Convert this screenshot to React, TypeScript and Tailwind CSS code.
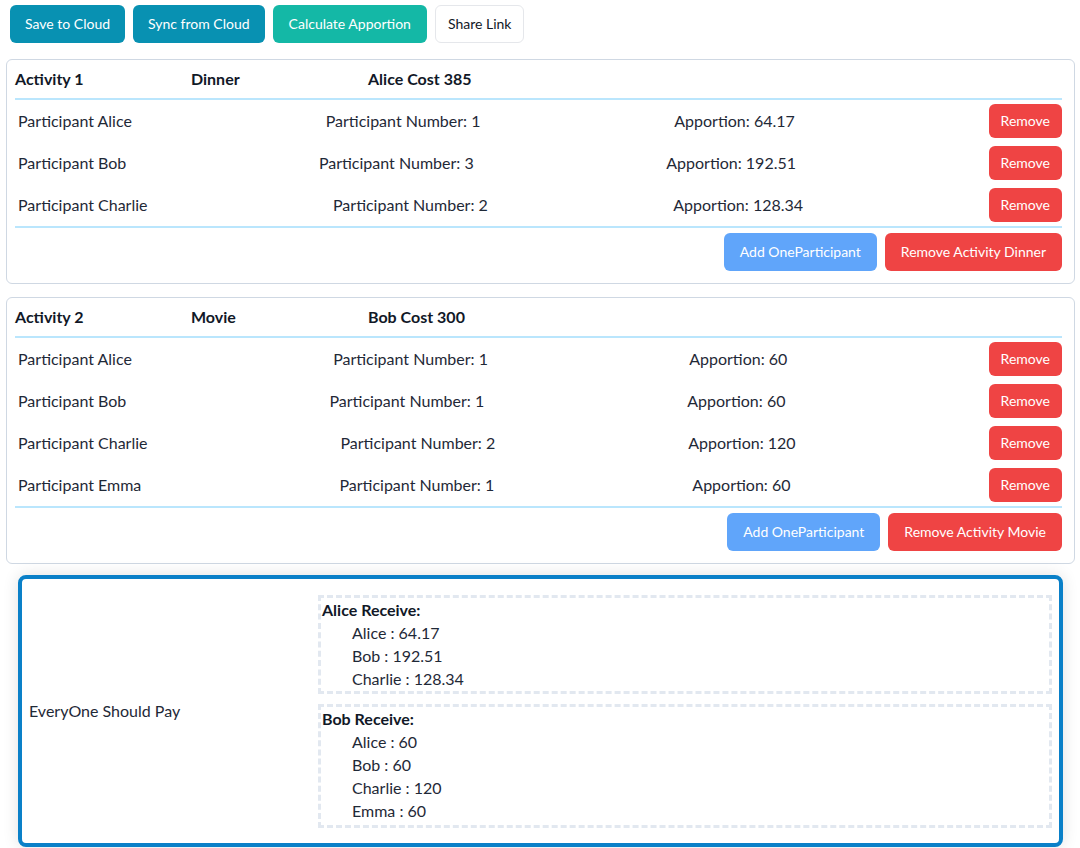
import React from "react";

type P = { name: string; num: number; app: string };
type A = { idx: number; name: string; payer: string; cost: number; parts: P[] };

const activities: A[] = [
  {
    idx: 1,
    name: "Dinner",
    payer: "Alice",
    cost: 385,
    parts: [
      { name: "Alice", num: 1, app: "64.17" },
      { name: "Bob", num: 3, app: "192.51" },
      { name: "Charlie", num: 2, app: "128.34" },
    ],
  },
  {
    idx: 2,
    name: "Movie",
    payer: "Bob",
    cost: 300,
    parts: [
      { name: "Alice", num: 1, app: "60" },
      { name: "Bob", num: 1, app: "60" },
      { name: "Charlie", num: 2, app: "120" },
      { name: "Emma", num: 1, app: "60" },
    ],
  },
];

const receives = [
  {
    who: "Alice",
    items: [
      ["Alice", "64.17"],
      ["Bob", "192.51"],
      ["Charlie", "128.34"],
    ],
  },
  {
    who: "Bob",
    items: [
      ["Alice", "60"],
      ["Bob", "60"],
      ["Charlie", "120"],
      ["Emma", "60"],
    ],
  },
];

function Card({ a }: { a: A }) {
  return (
    <div className="ml-[6px] mr-[5px] rounded-md border border-[#cfd8e3] bg-white pl-2 pr-3">
      <div className="flex pt-[7px] pb-[7px] font-bold text-[#111827] leading-6">
        <span className="w-[176px]">Activity {a.idx}</span>
        <span className="w-[177px]">{a.name}</span>
        <span>
          {a.payer} Cost {a.cost}
        </span>
      </div>
      <div className="border-t-2 border-[#bae6fd]" />
      {a.parts.map((p) => (
        <div key={p.name} className="flex items-center justify-between pl-[3px] py-1 text-[#1f2937]">
          <span>Participant {p.name}</span>
          <span>Participant Number: {p.num}</span>
          <span>Apportion: {p.app}</span>
          <button className="rounded-md bg-[#ef4444] px-3 py-[7px] text-sm leading-5 text-white">
            Remove
          </button>
        </div>
      ))}
      <div className="border-t-2 border-[#bae6fd]" />
      <div className="flex justify-end gap-2 pt-[5px] pb-3">
        <button className="rounded-md bg-[#60a5fa] px-4 py-[9px] text-sm leading-5 text-white">
          Add OneParticipant
        </button>
        <button className="rounded-md bg-[#ef4444] px-4 py-[9px] text-sm leading-5 text-white">
          Remove Activity {a.name}
        </button>
      </div>
    </div>
  );
}

export default function App() {
  return (
    <div
      className="min-h-[848px] bg-white text-base text-[#1f2937]"
      style={{ fontFamily: "Lato, 'Open Sans', sans-serif" }}
    >
      <div className="flex gap-2 pl-[10px] pt-[5px]">
        <button className="rounded-md bg-[#0891b2] px-[15px] py-[9px] text-sm leading-5 text-white">
          Save to Cloud
        </button>
        <button className="rounded-md bg-[#0891b2] px-[15px] py-[9px] text-sm leading-5 text-white">
          Sync from Cloud
        </button>
        <button className="rounded-md bg-[#14b8a6] px-4 py-[9px] text-sm leading-5 text-white">
          Calculate Apportion
        </button>
        <button className="rounded-md border border-[#e5e7eb] bg-white px-3 py-2 text-sm leading-5 text-[#111827]">
          Share Link
        </button>
      </div>
      <div className="mt-4 flex flex-col gap-[13px]">
        {activities.map((a) => (
          <Card key={a.idx} a={a} />
        ))}
        <div className="-mt-[2px] ml-[18px] mr-[17px] grid grid-cols-[296px_1fr] rounded-lg border-4 border-[#0a80c8] bg-white shadow-[0_0_16px_rgba(0,0,0,0.12)]">
          <div className="flex items-center pl-[7px]">EveryOne Should Pay</div>
          <div className="flex flex-col gap-[10px] pt-4 pb-[15px] pr-[7px]">
            {receives.map((r, i) => (
              <div
                key={r.who}
                className={
                  i === 0
                    ? "border-[3px] border-dashed border-[#e2e8f0] pl-px pb-px leading-[23px]"
                    : "border-[3px] border-dashed border-[#e2e8f0] pl-px pb-[3px] leading-[23px]"
                }
              >
                <div className="font-bold text-[#111827]">{r.who} Receive:</div>
                {r.items.map(([n, v]) => (
                  <div key={n} className="pl-[30px]">
                    {n} : {v}
                  </div>
                ))}
              </div>
            ))}
          </div>
        </div>
      </div>
    </div>
  );
}
